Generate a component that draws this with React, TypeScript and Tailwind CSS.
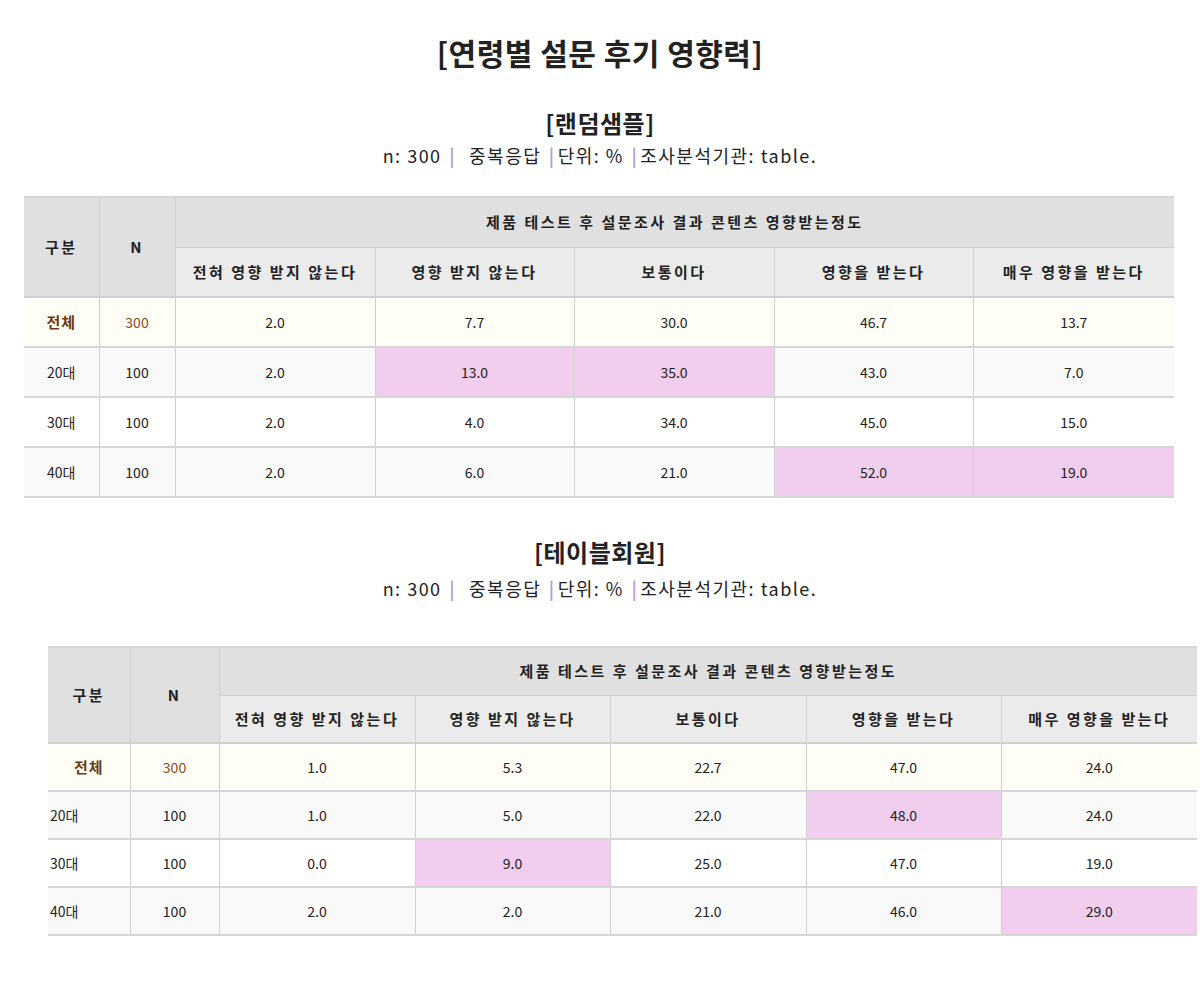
import React from 'react';

type Row = { label: string; n: string; values: string[]; hi: number[] };

const choices = ['전혀 영향 받지 않는다', '영향 받지 않는다', '보통이다', '영향을 받는다', '매우 영향을 받는다'];

const randomRows: Row[] = [
  { label: '20대', n: '100', values: ['2.0', '13.0', '35.0', '43.0', '7.0'], hi: [1, 2] },
  { label: '30대', n: '100', values: ['2.0', '4.0', '34.0', '45.0', '15.0'], hi: [] },
  { label: '40대', n: '100', values: ['2.0', '6.0', '21.0', '52.0', '19.0'], hi: [3, 4] },
];

const memberRows: Row[] = [
  { label: '20대', n: '100', values: ['1.0', '5.0', '22.0', '48.0', '24.0'], hi: [3] },
  { label: '30대', n: '100', values: ['0.0', '9.0', '25.0', '47.0', '19.0'], hi: [1] },
  { label: '40대', n: '100', values: ['2.0', '2.0', '21.0', '46.0', '29.0'], hi: [4] },
];

const Sep = () => <span className="text-[#b9a0cf] font-bold mx-[2px]">|</span>;

const Meta = ({ className }: { className: string }) => (
  <p className={`text-[18px] leading-[26px] tracking-[1.5px] text-[#222] ${className}`}>
    n: 300 <Sep />&nbsp; 중복응답 <Sep />단위: % <Sep />조사분석기관: table.
  </p>
);

const SurveyTable = ({
  total,
  rows,
  widths,
  rowH,
  leftLabels,
  className,
}: {
  total: string[];
  rows: Row[];
  widths: string[];
  rowH: string;
  leftLabels: boolean;
  className: string;
}) => (
  <table className={`border-collapse table-fixed text-[14px] text-[#222] ${className}`}>
    <colgroup>
      {widths.map((w, i) => (
        <col key={i} className={w} />
      ))}
    </colgroup>
    <thead className="text-[15px] tracking-[2.5px]">
      <tr className={`${rowH} bg-[#e0e0e0] border-t-2 border-[#d6d6d6]`}>
        <th rowSpan={2} className="font-bold border-r border-b-2 border-[#d0d0d0]">구분</th>
        <th rowSpan={2} className="font-bold border-r border-b-2 border-[#d0d0d0]">N</th>
        <th colSpan={5} className="font-bold border-b border-[#d0d0d0]">제품 테스트 후 설문조사 결과 콘텐츠 영향받는정도</th>
      </tr>
      <tr className={`${rowH} bg-[#ebebeb]`}>
        {choices.map((c, i) => (
          <th key={c} className={`font-bold border-b-2 border-[#d0d0d0] ${i < 4 ? 'border-r' : ''}`}>{c}</th>
        ))}
      </tr>
    </thead>
    <tbody>
      <tr className={`${rowH} bg-[#fffef6] border-b-2 border-[#d6d6d6]`}>
        <td className="text-center text-[15px] tracking-[1px] font-bold text-[#6b3a12] border-r border-[#d0d0d0]">전체</td>
        <td className="text-center text-[#8a4a1c] border-r border-[#d0d0d0]">300</td>
        {total.map((v, i) => (
          <td key={i} className={`text-center ${i < 4 ? 'border-r border-[#d0d0d0]' : ''}`}>{v}</td>
        ))}
      </tr>
      {rows.map((r, ri) => (
        <tr key={r.label} className={`${rowH} border-b-2 border-[#d6d6d6] ${ri === 1 ? 'bg-white' : 'bg-[#f9f9f9]'}`}>
          <td className={`border-r border-[#d0d0d0] ${leftLabels ? 'text-left pl-[2px]' : 'text-center'}`}>{r.label}</td>
          <td className="text-center border-r border-[#d0d0d0]">{r.n}</td>
          {r.values.map((v, i) => (
            <td
              key={i}
              className={`text-center ${i < 4 ? 'border-r border-[#d0d0d0]' : ''} ${r.hi.includes(i) ? 'bg-[#f1cdee]' : ''}`}
            >
              {v}
            </td>
          ))}
        </tr>
      ))}
    </tbody>
  </table>
);

export default function App() {
  return (
    <div className="min-h-screen bg-white font-['Noto_Sans_CJK_KR','Noto_Sans',sans-serif] pb-10">
      <h1 className="pt-[30px] text-center text-[30px] leading-[44px] tracking-[0.5px] font-bold text-[#222]">
        [연령별 설문 후기 영향력]
      </h1>

      <h2 className="mt-[33px] text-center text-[24px] leading-[32px] tracking-[0.5px] font-bold text-[#222]">[랜덤샘플]</h2>
      <Meta className="mt-[3px] text-center" />
      <SurveyTable
        className="mt-[28px] ml-[24px] w-[1150px]"
        total={['2.0', '7.7', '30.0', '46.7', '13.7']}
        rows={randomRows}
        widths={['w-[75px]', 'w-[76px]', 'w-[200px]', 'w-[199px]', 'w-[200px]', 'w-[199px]', 'w-[201px]']}
        rowH="h-[50px]"
        leftLabels={false}
      />

      <h2 className="mt-[38px] text-center text-[24px] leading-[32px] tracking-[0.5px] font-bold text-[#222]">[테이블회원]</h2>
      <Meta className="mt-[7px] text-center" />
      <SurveyTable
        className="mt-[45px] ml-[48px] w-[1149px]"
        total={['1.0', '5.3', '22.7', '47.0', '24.0']}
        rows={memberRows}
        widths={['w-[82px]', 'w-[89px]', 'w-[196px]', 'w-[195px]', 'w-[196px]', 'w-[195px]', 'w-[196px]']}
        rowH="h-[48px]"
        leftLabels={true}
      />
    </div>
  );
}
